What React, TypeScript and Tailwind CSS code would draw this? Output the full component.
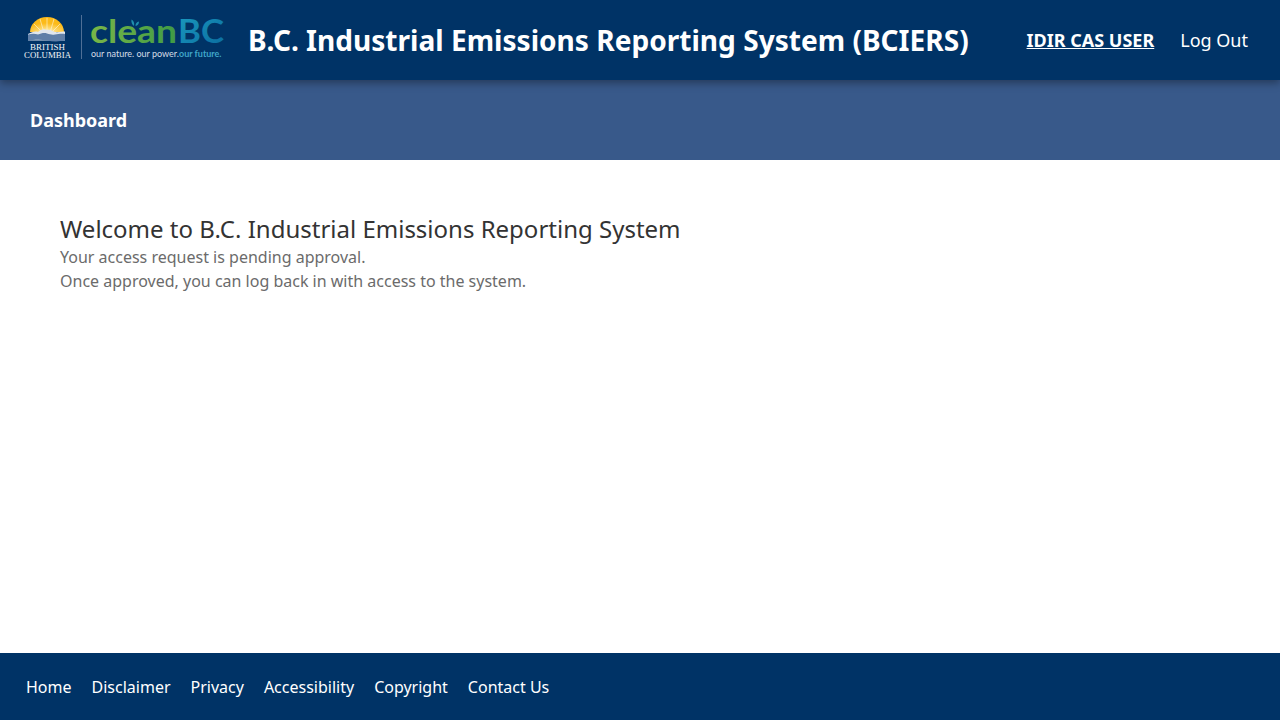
const fontStack = "font-['Noto_Sans',sans-serif]";

const footerLinks = ["Home", "Disclaimer", "Privacy", "Accessibility", "Copyright", "Contact Us"];

// viewBox matches page coordinates so the logo parts line up with the screenshot
function Logo() {
  return (
    <svg width="200" height="60" viewBox="24 10 200 60" className="shrink-0">
      <defs>
        <linearGradient id="cleanFill" x1="0" y1="0" x2="1" y2="0">
          <stop offset="0" stopColor="#7ab648" />
          <stop offset="1" stopColor="#3f9b45" />
        </linearGradient>
        <linearGradient id="bcFill" x1="0" y1="0" x2="1" y2="1">
          <stop offset="0" stopColor="#1b9cc0" />
          <stop offset="1" stopColor="#0a6a9e" />
        </linearGradient>
        <radialGradient id="sunFill" cx="0.5" cy="1" r="1">
          <stop offset="0" stopColor="#fff3c4" />
          <stop offset="0.3" stopColor="#fdd566" />
          <stop offset="0.6" stopColor="#fcba19" />
        </radialGradient>
      </defs>
      <path d="M30 32a17 15 0 0 1 34 0z" fill="url(#sunFill)" />
      <g stroke="#fff8e0" strokeWidth="0.7" opacity="0.85">
        <path d="M47 18v13M40 19l3.500 12M54 19l-3.500 12M34 24l7 7M60 24l-7 7" />
      </g>
      <path d="M28 34c4-2 7-3 10-2 3-2.500 6-3.500 9-2 3-1 5 1 8 2 3 .5 7-.5 10-.5v9H28z" fill="#dfe6ee" />
      <path d="M28 34.500c4-1 7-1 10 0 3-1 6-2 9-1 3 1 5 1.500 8 1 3-.5 7-1 10-.5v6c-6 2-12 1.500-18 .5s-13-1-19 .5z" fill="#5f7fa8" />
      <text x="47.500" y="49.500" textAnchor="middle" fontFamily="Liberation Serif, serif" fontSize="8.500" fill="#f2f5f8" textLength="35" lengthAdjust="spacingAndGlyphs">BRITISH</text>
      <text x="47.500" y="57.500" textAnchor="middle" fontFamily="Liberation Serif, serif" fontSize="8.500" fill="#f2f5f8" textLength="47" lengthAdjust="spacingAndGlyphs">COLUMBIA</text>
      <rect x="81" y="15" width="1" height="44" fill="#4f6f96" />
      <text x="90" y="43" fontFamily="Lato, sans-serif" fontSize="32" fontWeight="700" fill="url(#cleanFill)" textLength="87" lengthAdjust="spacingAndGlyphs">clean</text>
      <text x="178" y="43" fontFamily="Lato, sans-serif" fontSize="33" fontWeight="700" fill="url(#bcFill)" textLength="46" lengthAdjust="spacingAndGlyphs">BC</text>
      <path d="M134 26c-2-1.500-3-4-2.500-6.500 2 1 3.200 3.500 2.500 6.500zM135.500 26c0-2.500 1.200-4 3.500-4.500 0 2.500-1.200 4-3.500 4.500z" fill="#1f8fae" />
      <text x="91" y="57" fontFamily="Lato, sans-serif" fontSize="9" fill="#d5dde6">our nature. our power.</text>
      <text x="179" y="57" fontFamily="Lato, sans-serif" fontSize="9" fontWeight="700" fill="#3fa6c9">our future.</text>
    </svg>
  );
}

export default function App() {
  return (
    <div className={`flex h-[720px] flex-col bg-white ${fontStack}`}>
      <header className="relative z-10 flex h-20 items-center justify-between bg-[#003366] pl-6 pr-8 text-white shadow-[0_3px_8px_rgba(0,0,0,0.35)]">
        <div className="flex items-center gap-6">
          <Logo />
          <h1 className="text-[28.08px] leading-10 font-bold">B.C. Industrial Emissions Reporting System (BCIERS)</h1>
        </div>
        <nav className="flex items-center gap-[26px]">
          <a className="text-lg font-bold underline">IDIR CAS USER</a>
          <a className="text-lg">Log Out</a>
        </nav>
      </header>

      <div className="flex h-20 items-center bg-[#38598a] pl-[30px] text-white">
        <span className="text-lg font-bold">Dashboard</span>
      </div>

      <main className="flex-1 px-[60px] pt-[52px]">
        <h2 className="text-2xl leading-[33px] text-[#333333]">Welcome to B.C. Industrial Emissions Reporting System</h2>
        <p className="text-base leading-6 text-[#6b6b6b]">Your access request is pending approval.</p>
        <p className="text-base leading-6 text-[#6b6b6b]">Once approved, you can log back in with access to the system.</p>
      </main>

      <footer className="flex h-[67px] items-center gap-5 bg-[#003366] pl-[26px] text-base text-white">
        {footerLinks.map((link) => (
          <a key={link}>{link}</a>
        ))}
      </footer>
    </div>
  );
}
